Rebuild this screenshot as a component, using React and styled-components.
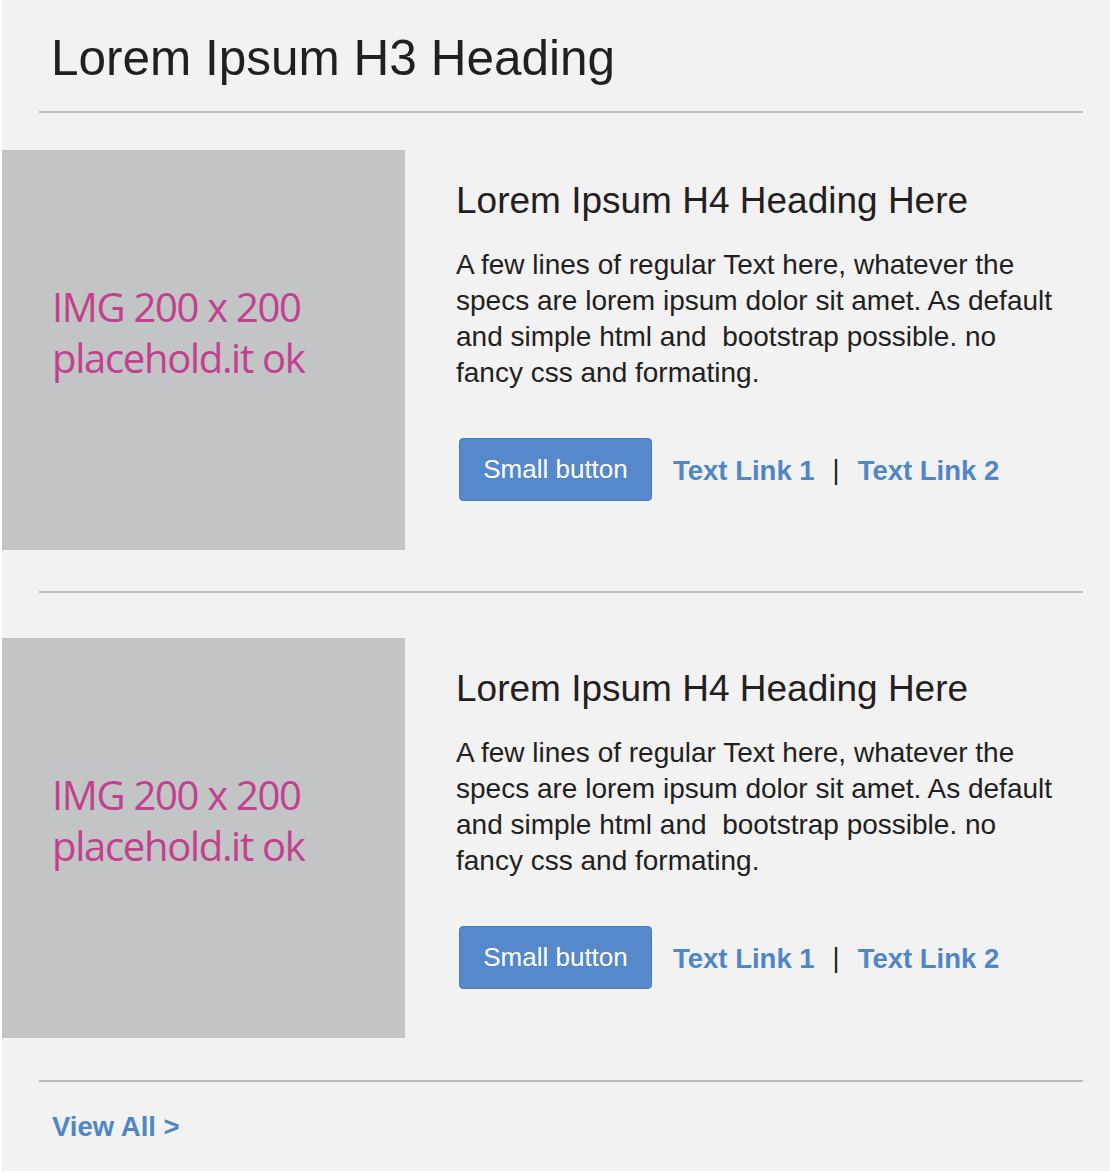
import React from "react";
import styled, { createGlobalStyle } from "styled-components";

const GlobalStyle = createGlobalStyle`
  html, body {
    margin: 0;
    padding: 0;
    background: #ffffff;
  }
`;

const items = [
  {
    title: "Lorem Ipsum H4 Heading Here",
    text: "A few lines of regular Text here, whatever the specs are lorem ipsum dolor sit amet. As default and simple html and\u00a0 bootstrap possible. no fancy css and formating.",
  },
  {
    title: "Lorem Ipsum H4 Heading Here",
    text: "A few lines of regular Text here, whatever the specs are lorem ipsum dolor sit amet. As default and simple html and\u00a0 bootstrap possible. no fancy css and formating.",
  },
];

const dividers = [
  { top: 28, bottom: 37 },
  { top: 41, bottom: 45 },
  { top: 42, bottom: 0 },
];

const App = () => {
  return (
    <>
      <GlobalStyle />
      <Page>
        <Header>
          <H3>Lorem Ipsum H3 Heading</H3>
        </Header>
        {items.map((item, index) => (
          <React.Fragment key={index}>
            <Divider $top={dividers[index].top} $bottom={dividers[index].bottom} />
            <Item>
              <ImageBox>
                <ImageLabel>IMG 200 x 200</ImageLabel>
                <ImageLabel>placehold.it ok</ImageLabel>
              </ImageBox>
              <Body>
                <H4>{item.title}</H4>
                <Text>{item.text}</Text>
                <Actions>
                  <SmallButton type="button">Small button</SmallButton>
                  <Links>
                    <TextLink href="#">Text Link 1</TextLink>
                    <Pipe>|</Pipe>
                    <TextLink href="#">Text Link 2</TextLink>
                  </Links>
                </Actions>
              </Body>
            </Item>
          </React.Fragment>
        ))}
        <Divider $top={dividers[2].top} $bottom={dividers[2].bottom} />
        <Footer>
          <TextLink href="#">View All &gt;</TextLink>
        </Footer>
      </Page>
    </>
  );
};

export default App;

const Page = styled.div`
  margin-left: 2px;
  width: 1108px;
  background: #f2f2f2;
  font-family: "Liberation Sans", Arial, sans-serif;
  color: #231f20;
  padding-bottom: 31px;
`;

const Header = styled.div`
  padding: 33px 0 0 49px;
`;

const H3 = styled.h3`
  margin: 0;
  font-size: 49.5px;
  line-height: 1;
  font-weight: normal;
`;

const Divider = styled.div`
  height: 2px;
  background: #bdbdbd;
  margin: ${(p) => p.$top}px 27px ${(p) => p.$bottom}px 37px;
`;

const Item = styled.div`
  display: flex;
  gap: 51px;
`;

const ImageBox = styled.div`
  flex: none;
  width: 403px;
  height: 400px;
  box-sizing: border-box;
  background: #c3c4c6;
  padding: 131px 0 0 50px;
`;

const ImageLabel = styled.div`
  font-family: "Open Sans", "Noto Sans", sans-serif;
  font-size: 40px;
  line-height: 51px;
  letter-spacing: -1.3px;
  color: #c2408e;
`;

const Body = styled.div`
  width: 603px;
  padding-top: 32px;
`;

const H4 = styled.h4`
  margin: 0;
  font-size: 37px;
  line-height: 1;
  font-weight: normal;
  white-space: nowrap;
`;

const Text = styled.p`
  margin: 28px 0 0;
  font-size: 28px;
  line-height: 36px;
`;

const Actions = styled.div`
  display: flex;
  align-items: center;
  gap: 21px;
  margin-top: 47px;
  padding-left: 3px;
`;

const SmallButton = styled.button`
  width: 193px;
  height: 63px;
  padding: 0;
  background: #5589cc;
  border: 1px solid #4a7ec0;
  border-radius: 4px;
  color: #ffffff;
  font-family: "Liberation Sans", Arial, sans-serif;
  font-size: 26px;
  cursor: pointer;
`;

const Links = styled.div`
  display: flex;
  align-items: center;
  gap: 18px;
  padding-top: 3px;
`;

const TextLink = styled.a`
  color: #4f86c6;
  font-size: 27.5px;
  line-height: 1;
  font-weight: bold;
  text-decoration: none;
`;

const Pipe = styled.span`
  font-size: 27px;
  line-height: 1;
  color: #231f20;
`;

const Footer = styled.div`
  padding: 31px 0 0 50px;
  line-height: 1;
`;
